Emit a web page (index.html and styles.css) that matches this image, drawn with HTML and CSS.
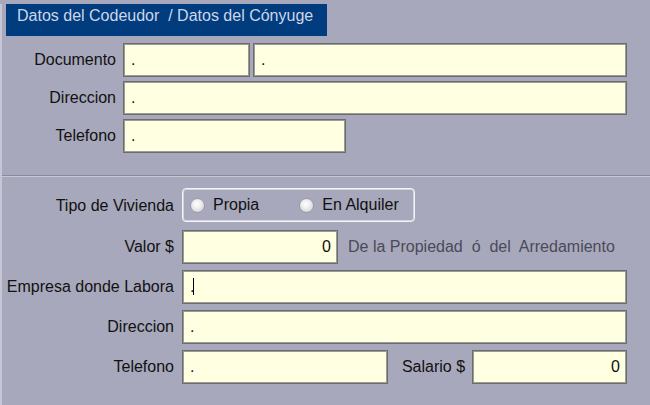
FILE: index.html
```html
<!DOCTYPE html>
<html lang="es">
<head>
<meta charset="utf-8">
<title>Datos del Codeudor</title>
<link rel="stylesheet" href="styles.css">
</head>
<body>
<div class="window">
  <div class="header">Datos del Codeudor  / Datos del Cónyuge</div>

  <div class="form form-top">
    <div class="label">Documento</div>
    <div class="row">
      <div class="field w-doc1">.</div>
      <div class="field w-doc2">.</div>
    </div>
    <div class="label">Direccion</div>
    <div class="row"><div class="field w-full">.</div></div>
    <div class="label">Telefono</div>
    <div class="row"><div class="field w-tel1">.</div></div>
  </div>

  <div class="separator"></div>

  <div class="form form-bottom">
    <div class="label">Tipo de Vivienda</div>
    <div class="row">
      <div class="group">
        <span class="radio-item"><span class="radio"></span>Propia</span>
        <span class="radio-item alt"><span class="radio"></span>En Alquiler</span>
      </div>
    </div>

    <div class="label">Valor $</div>
    <div class="row">
      <div class="field num w-valor">0</div>
      <span class="hint">De la Propiedad  ó  del  Arredamiento</span>
    </div>

    <div class="label">Empresa donde Labora</div>
    <div class="row"><div class="field w-full2"><span class="caret-dot">.</span><span class="caret"></span></div></div>

    <div class="label">Direccion</div>
    <div class="row"><div class="field w-full2">.</div></div>

    <div class="label">Telefono</div>
    <div class="row">
      <div class="field w-tel2">.</div>
      <span class="label inline">Salario $</span>
      <div class="field num w-sal">0</div>
    </div>
  </div>
</div>
</body>
</html>
```

FILE: styles.css
```css
html, body {
  margin: 0;
  padding: 0;
}
body {
  width: 650px;
  height: 405px;
  overflow: hidden;
  background: #a8a8bc;
  font-family: "Liberation Sans", Arial, sans-serif;
  font-size: 16px;
  color: #111111;
}
.window {
  height: 405px;
  border-left: 2px solid #c6c6d6;
  box-sizing: border-box;
}
.header {
  margin: 4px 0 0 4px;
  width: 321px;
  height: 32px;
  box-sizing: border-box;
  padding: 3px 0 0 11px;
  line-height: 18px;
  background: #003c7e;
  color: #cdd6e8;
  white-space: pre;
}
.form {
  display: grid;
  align-items: center;
}
.form-top {
  margin-top: 7px;
  grid-template-columns: 114px 504px;
  column-gap: 7px;
  row-gap: 4px;
}
.form-bottom {
  margin-top: 11px;
  grid-template-columns: 172px 445px;
  column-gap: 8px;
  row-gap: 6px;
}
.label {
  text-align: right;
  white-space: nowrap;
  line-height: 18px;
}
.label.inline {
  margin: 0 4px 0 11px;
}
.row {
  display: flex;
  align-items: center;
  gap: 3px;
}
.field {
  box-sizing: border-box;
  height: 34px;
  background: #ffffe1;
  border: 1px solid #6c6c6c;
  box-shadow: inset 0 0 0 1px #9c9c94;
  padding: 0 6px 0 7px;
  line-height: 32px;
  white-space: nowrap;
  display: flex;
  align-items: center;
}
.field.num {
  justify-content: flex-end;
}
.w-doc1 { width: 127px; }
.w-doc2 { width: 374px; }
.w-full { width: 504px; }
.w-tel1 { width: 223px; }
.w-valor { width: 156px; }
.w-full2 { width: 445px; }
.w-tel2 { width: 206px; }
.w-sal { width: 155px; }

.separator {
  margin-top: 22px;
  height: 1px;
  background: #8a8a98;
  border-bottom: 1px solid #c8c8d2;
}
.group {
  box-sizing: border-box;
  width: 233px;
  height: 34px;
  margin-bottom: 2px;
  border: 1px solid #f4f4f6;
  box-shadow: inset 0 0 0 1px #d4d4de;
  border-radius: 4px;
  display: flex;
  align-items: center;
  padding-left: 7px;
}
.radio-item {
  display: flex;
  align-items: center;
  gap: 8px;
  line-height: 18px;
}
.radio-item.alt {
  margin-left: 40px;
}
.radio {
  width: 15px;
  height: 15px;
  box-sizing: border-box;
  border-radius: 50%;
  border: 1px solid #9a9aa4;
  background: radial-gradient(circle at 45% 40%, #ffffff 0%, #f0f0f0 35%, #c8c8cc 100%);
}
.hint {
  margin-left: 7px;
  color: #4a4a58;
  white-space: pre;
  line-height: 18px;
}
.caret {
  display: inline-block;
  width: 1px;
  height: 17px;
  background: #000;
  margin-left: -1px;
  margin-top: -2px;
}
```
